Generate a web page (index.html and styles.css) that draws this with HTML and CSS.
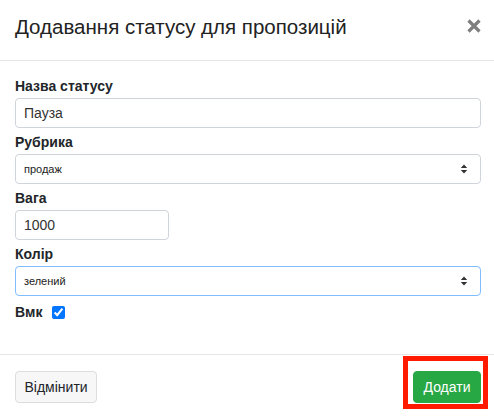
FILE: index.html
```html
<!DOCTYPE html>
<html lang="uk">
<head>
<meta charset="utf-8">
<title>Додавання статусу для пропозицій</title>
<link rel="stylesheet" href="styles.css">
</head>
<body>
<div class="modal">
  <div class="modal-header">
    <h5 class="modal-title">Додавання статусу для пропозицій</h5>
    <button class="close" type="button" aria-label="Close">
      <svg width="14" height="14" viewBox="0 0 14 14"><path d="M1.5 1.5 L12.5 12.5 M12.5 1.5 L1.5 12.5" stroke="#7f7f7f" stroke-width="3.2" fill="none"/></svg>
    </button>
  </div>
  <div class="modal-body">
    <div class="group">
      <label class="label">Назва статусу</label>
      <input class="control" type="text" value="Пауза">
    </div>
    <div class="group">
      <label class="label">Рубрика</label>
      <div class="select-wrap">
        <div class="control select">продаж</div>
        <svg class="arrows" width="8" height="10" viewBox="0 0 8 10"><path d="M4 0.5 L7.2 4 L0.8 4 Z M4 9.5 L7.2 6 L0.8 6 Z" fill="#333"/></svg>
      </div>
    </div>
    <div class="group">
      <label class="label">Вага</label>
      <input class="control short" type="text" value="1000">
    </div>
    <div class="group">
      <label class="label">Колір</label>
      <div class="select-wrap">
        <div class="control select focus">зелений</div>
        <svg class="arrows" width="8" height="10" viewBox="0 0 8 10"><path d="M4 0.5 L7.2 4 L0.8 4 Z M4 9.5 L7.2 6 L0.8 6 Z" fill="#333"/></svg>
      </div>
    </div>
    <div class="check-row">
      <label class="label inline">Вмк</label>
      <input class="check" type="checkbox" checked>
    </div>
  </div>
  <div class="modal-footer">
    <button class="btn btn-light" type="button">Відмінити</button>
    <span class="highlight-wrap">
      <button class="btn btn-success" type="button">Додати</button>
      <span class="highlight"></span>
    </span>
  </div>
</div>
</body>
</html>
```
FILE: styles.css
```css
* { box-sizing: border-box; }
html, body { margin: 0; padding: 0; background: #fff; }
body {
  font-family: "Liberation Sans", Arial, Helvetica, sans-serif;
  color: #212529;
}
.modal { width: 494px; }
.modal-header {
  height: 61px;
  border-bottom: 1px solid #e6e6e6;
  display: flex;
  justify-content: space-between;
  align-items: flex-start;
  padding: 15px 13px 0 15px;
}
.modal-title {
  margin: 0;
  font-size: 20.5px;
  line-height: 24px;
  font-weight: normal;
  color: #222;
}
.close {
  border: 0;
  background: none;
  padding: 0;
  margin-top: 4px;
  width: 14px;
  height: 14px;
  display: block;
}
.close svg { display: block; }
.modal-body {
  padding: 17px 13px 32px 15px;
}
.group { margin-bottom: 6px; }
.label {
  display: block;
  font-size: 14px;
  font-weight: bold;
  line-height: 17px;
  margin-bottom: 3px;
  color: #212529;
}
.control {
  display: block;
  width: 100%;
  height: 30px;
  border: 1px solid #ced4da;
  border-radius: 4px;
  padding: 0 8px;
  font-family: "Liberation Sans", Arial, sans-serif;
  font-size: 14px;
  color: #333;
  background: #fff;
  outline: none;
}
.control.short { width: 154px; }
.select-wrap { position: relative; }
.select {
  font-size: 11px;
  line-height: 28px;
  color: #222;
}
.select.focus { border-color: #80bdff; }
.arrows {
  position: absolute;
  right: 13px;
  top: 10px;
}
.check-row {
  display: flex;
  align-items: center;
  height: 20px;
}
.label.inline { margin: 0; line-height: 20px; }
.check {
  margin: 0 0 0 10px;
  width: 13px;
  height: 13px;
}
.modal-footer {
  border-top: 1px solid #e6e6e6;
  display: flex;
  justify-content: space-between;
  align-items: flex-start;
  padding: 16px 13px 0 15px;
  height: 62px;
}
.btn {
  font-family: "Liberation Sans", Arial, sans-serif;
  font-size: 14px;
  height: 32px;
  padding: 0 8.5px;
  border-radius: 4px;
  border: 1px solid #ddd;
  display: block;
}
.btn-light {
  background: #f7f7f8;
  color: #212529;
}
.btn-success {
  background: #28a745;
  border-color: #28a745;
  color: #fff;
  padding: 0 9.5px;
}
.highlight-wrap { position: relative; display: block; }
.highlight {
  position: absolute;
  left: -10px;
  right: -7px;
  top: -15px;
  bottom: -6px;
  border: 5px solid #ff1a00;
  pointer-events: none;
}
```
